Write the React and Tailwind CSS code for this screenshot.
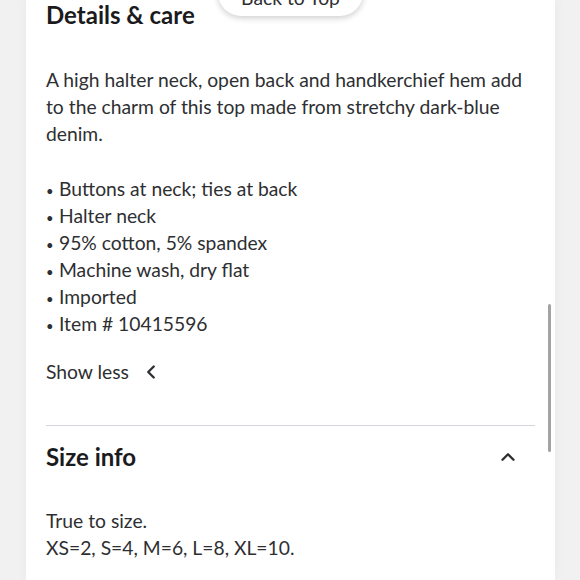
import { ChevronLeft, ChevronUp } from 'lucide-react';

const bullets = [
  'Buttons at neck; ties at back',
  'Halter neck',
  '95% cotton, 5% spandex',
  'Machine wash, dry flat',
  'Imported',
  'Item # 10415596',
];

export default function App() {
  return (
    <div className="relative h-[580px] w-[580px] overflow-hidden bg-[#f1f1f1] font-['Lato',sans-serif] text-[#2e2f32]">
      <div className="absolute left-[218px] top-[-30px] z-10 flex h-[46px] w-[145px] items-end justify-center rounded-full bg-white pb-[5px] text-[19.3px] leading-[27px] shadow-[0_2px_6px_rgba(0,0,0,0.2)]">
        Back to Top
      </div>

      <div className="ml-[26px] mr-[25px] flow-root h-full bg-white shadow-[0_0_12px_rgba(0,0,0,0.04)]">
        <div className="relative px-[20px]">
          <h2 className="mt-[-3px] text-[24px] font-bold leading-[36px] text-[#1b1b1d]">Details &amp; care</h2>

          <p className="mt-[33px] text-[19.3px] leading-[27px]">
            A high halter neck, open back and handkerchief hem add to the charm of this top made from stretchy dark-blue denim.
          </p>

          <ul className="mt-[28px] text-[19.3px] leading-[27px]">
            {bullets.map((b) => (
              <li key={b}>
                <span className="inline-block w-[13px] text-[13px] leading-none">•</span>
                {b}
              </li>
            ))}
          </ul>

          <div className="mt-[21px] flex items-center gap-[11px] text-[19.3px] leading-[27px]">
            <span>Show less</span>
            <ChevronLeft className="h-[22px] w-[22px]" strokeWidth={2.6} />
          </div>

          <div className="mt-[40px] border-t border-[#d3d6dc]" />

          <div className="mt-[13px] flex items-center justify-between pr-[16px]">
            <h2 className="text-[24px] font-bold leading-[36px] text-[#1b1b1d]">Size info</h2>
            <ChevronUp className="h-[22px] w-[22px]" strokeWidth={2.6} />
          </div>

          <p className="mt-[32px] text-[19.3px] leading-[27px]">
            True to size.
            <br />
            XS=2, S=4, M=6, L=8, XL=10.
          </p>

          <div className="absolute right-[4px] top-[307px] h-[148px] w-[3px] rounded-full bg-[#a3a3a3]" />
        </div>
      </div>
    </div>
  );
}
